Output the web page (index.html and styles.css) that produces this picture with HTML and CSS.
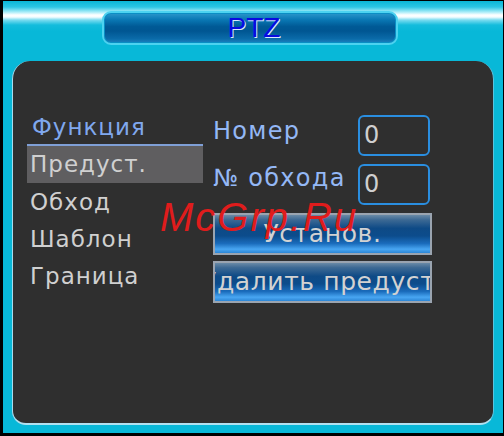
FILE: index.html
```html
<!DOCTYPE html>
<html>
<head>
<meta charset="utf-8">
<link rel="stylesheet" href="styles.css">
</head>
<body>
<div class="frame">
  <div class="title"><span>PTZ</span></div>
  <div class="panel">
    <div class="menu">
      <div class="menu-head">Функция</div>
      <div class="menu-item active">Предуст.</div>
      <div class="menu-item">Обход</div>
      <div class="menu-item">Шаблон</div>
      <div class="menu-item">Граница</div>
    </div>
    <div class="form">
      <div class="row">
        <div class="label">Номер</div>
        <div class="input">0</div>
      </div>
      <div class="row">
        <div class="label">№ обхода</div>
        <div class="input">0</div>
      </div>
      <div class="btn"><span>Установ.</span></div>
      <div class="btn"><span>Удалить предуст.</span></div>
    </div>
    <div class="watermark">McGrp.Ru</div>
  </div>
</div>
</body>
</html>
```
FILE: styles.css
```css
html, body {
  margin: 0;
  padding: 0;
  background: #000;
}
body {
  font-family: "DejaVu Sans", Verdana, sans-serif;
}
.frame {
  position: relative;
  width: 504px;
  height: 436px;
  box-sizing: border-box;
  border-style: solid;
  border-color: #000;
  border-width: 1px 1px 3px 3px;
  background: linear-gradient(to bottom,
    #0ab6d6 0px, #2cc6e4 6px, #a8ecf8 11px, #ffffff 14px, #f4fcff 16px,
    #7adcf0 19px, #14bcdc 24px, #08b8d8 30px, #08b8d8 100%);
  padding: 10px 0 8px 9px;
  display: flex;
  flex-direction: column;
}
.title {
  margin-left: 90px;
  width: 296px;
  height: 34px;
  box-sizing: border-box;
  border-radius: 9px;
  border: 2px solid #4cd2f0;
  box-shadow: inset 0 0 0 1px #0a8ec4;
  background: linear-gradient(to bottom,
    #2c98cc 0%, #0a78b4 22%, #005a96 45%, #005692 60%, #0a6aa8 85%, #1a82c0 100%);
  display: flex;
  align-items: center;
  justify-content: center;
}
.title span {
  font-family: "Liberation Sans", Arial, sans-serif;
  font-size: 28px;
  line-height: 30px;
  color: #0a0ae0;
  text-shadow: 1px 1px 0 #d8e8ff;
  margin-left: 8px;
}
.panel {
  position: relative;
  margin-top: 16px;
  width: 482px;
  height: 365px;
  box-sizing: border-box;
  background: #2f2f2f;
  border-left: 1px solid #a8dcee;
  border-right: 1px solid #58c4e0;
  border-bottom: 2px solid #b0e0f0;
  border-radius: 18px 18px 14px 14px;
  display: flex;
  padding: 50px 0 0 14px;
}
.menu {
  width: 176px;
  display: flex;
  flex-direction: column;
}
.menu-head {
  height: 35px;
  box-sizing: border-box;
  border-bottom: 2px solid #7f9fd6;
  color: #80a8ee;
  font-size: 23px;
  line-height: 33px;
  padding-left: 5px;
  letter-spacing: 1px;
}
.menu-item {
  height: 37px;
  color: #d0d0d0;
  font-size: 23px;
  line-height: 39px;
  padding-left: 3px;
  letter-spacing: 1px;
}
.menu-item.active {
  background: #5f5e60;
  line-height: 37px;
}
.form {
  margin-left: 10px;
  margin-top: 4px;
  display: flex;
  flex-direction: column;
  width: 219px;
}
.row {
  display: flex;
  align-items: flex-start;
  height: 49px;
}
.label {
  width: 145px;
  color: #94b8f6;
  font-size: 24px;
  line-height: 32px;
  letter-spacing: 1.3px;
  white-space: nowrap;
}
.row + .row .label {
  line-height: 28px;
}
.input {
  width: 72px;
  height: 41px;
  box-sizing: border-box;
  border: 2px solid #2a8ee0;
  border-radius: 6px;
  color: #cfcfcf;
  font-size: 24px;
  line-height: 37px;
  padding-left: 4px;
}
.btn {
  width: 219px;
  height: 42px;
  box-sizing: border-box;
  border: 2px solid #9aa4b0;
  background: linear-gradient(to bottom,
    #6a8aa6 0%, #3e6a94 12%, #0e4a86 35%, #0c4c8c 55%, #1a6cbc 75%, #48a6f2 90%, #2c86d6 100%);
  display: flex;
  justify-content: center;
  align-items: center;
  overflow: hidden;
  margin-bottom: 6px;
}
.btn span {
  white-space: nowrap;
  color: #d2d2d2;
  font-size: 25px;
  line-height: 38px;
  letter-spacing: 0.6px;
  flex-shrink: 0;
}
.watermark {
  position: absolute;
  left: 147px;
  top: 134px;
  font-family: "Liberation Sans", Arial, sans-serif;
  color: #e01c1c;
  font-size: 40px;
  font-style: italic;
  line-height: 44px;
  letter-spacing: 2px;
}
```
